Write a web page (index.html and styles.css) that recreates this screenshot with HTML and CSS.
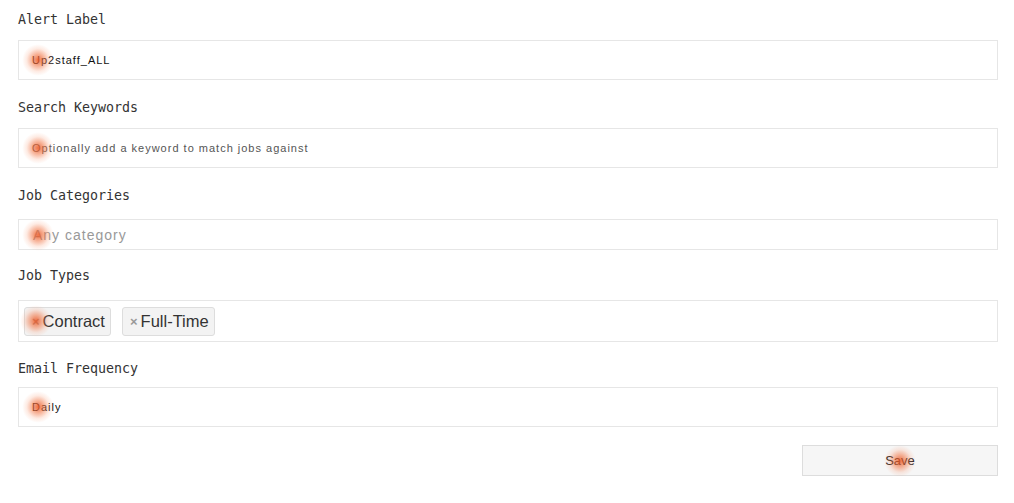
FILE: index.html
```html
<!DOCTYPE html>
<html lang="en">
<head>
    <meta charset="UTF-8">
    <meta name="viewport" content="width=device-width, initial-scale=1.0">
    <title>Edit Job Alert</title>
    <link rel="stylesheet" href="styles.css">
</head>
<body>
    <form class="alert-form">
        <!-- alert name -->
        <div class="field">
            <label class="field-label">Alert Label</label>
            <div class="control">
                <span class="glow"></span>
                <span class="control-text">Up2staff_ALL</span>
            </div>
        </div>

        <!-- keywords -->
        <div class="field">
            <label class="field-label">Search Keywords</label>
            <div class="control">
                <span class="glow"></span>
                <span class="control-text placeholder">Optionally add a keyword to match jobs against</span>
            </div>
        </div>

        <!-- categories -->
        <div class="field field-select">
            <label class="field-label">Job Categories</label>
            <div class="control control-short">
                <span class="glow"></span>
                <span class="select-placeholder">Any category</span>
            </div>
        </div>

        <!-- job types -->
        <div class="field field-select field-types">
            <label class="field-label">Job Types</label>
            <div class="control control-tags">
                <span class="tag"><span class="glow glow-tag"></span><span class="tag-remove">&times;</span>Contract</span>
                <span class="tag"><span class="tag-remove">&times;</span>Full-Time</span>
            </div>
        </div>

        <!-- frequency -->
        <div class="field field-frequency">
            <label class="field-label">Email Frequency</label>
            <div class="control">
                <span class="glow"></span>
                <span class="control-text">Daily</span>
            </div>
        </div>

        <div class="form-actions">
            <button type="button" class="save-btn"><span class="glow glow-center"></span>Save</button>
        </div>
    </form>
</body>
</html>
```

FILE: styles.css
```css
/* base */
* {
    margin: 0;
    padding: 0;
    box-sizing: border-box;
}

body {
    background: #ffffff;
    color: #222222;
    font-family: "Liberation Sans", Arial, sans-serif;
}

.alert-form {
    padding: 10px 16px 0 18px;
}

/* fields */
.field + .field {
    margin-top: 18px;
}

.field-label {
    display: block;
    font-family: "DejaVu Sans Mono", monospace;
    font-size: 13.3px;
    line-height: 20px;
    color: #333333;
    margin-bottom: 10px;
}

.field-select .field-label {
    margin-bottom: 13px;
}

.field-types {
    margin-top: 16px !important;
}

.field-types .field-label {
    margin-bottom: 14px;
}

.field-frequency {
    margin-top: 17px !important;
}

.field-frequency .field-label {
    margin-bottom: 8px;
}

.control {
    position: relative;
    display: flex;
    align-items: center;
    height: 40px;
    padding: 0 13px;
    border: 1px solid #e6e6e6;
    background: #ffffff;
}

.control-text {
    font-size: 11px;
    letter-spacing: 1px;
    color: #111111;
}

.control-text.placeholder {
    color: #555555;
}

.control-short {
    height: 31px;
    padding: 0 14px;
}

.select-placeholder {
    font-size: 14px;
    letter-spacing: 1px;
    color: #999999;
}

/* tags */
.control-tags {
    height: 42px;
    padding: 0 5px;
    gap: 11px;
}

.tag {
    position: relative;
    display: inline-flex;
    align-items: center;
    height: 29px;
    padding: 0 5px 0 7px;
    border: 1px solid #dddddd;
    border-radius: 3px;
    background: #f3f3f3;
    font-size: 16.5px;
    color: #333333;
}

.tag-remove {
    font-size: 13px;
    font-weight: bold;
    color: #999999;
    margin-right: 3px;
}

/* actions */
.form-actions {
    display: flex;
    justify-content: flex-end;
    margin-top: 18px;
}

.save-btn {
    position: relative;
    width: 196px;
    height: 31px;
    border: 1px solid #dddddd;
    background: #f6f6f6;
    font-family: "Liberation Sans", Arial, sans-serif;
    font-size: 13px;
    color: #222222;
}

/* click highlight markers */
.glow {
    position: absolute;
    left: 3px;
    top: 50%;
    width: 32px;
    height: 32px;
    margin-top: -16px;
    border-radius: 50%;
    background: radial-gradient(circle, rgba(236, 88, 38, 0.85) 0, rgba(240, 110, 60, 0.55) 25%, rgba(248, 150, 110, 0.2) 50%, rgba(250, 170, 140, 0) 70%);
    pointer-events: none;
}

.glow-tag {
    left: -5px;
}

.glow-center {
    left: 50%;
    margin-left: -16px;
}
```
